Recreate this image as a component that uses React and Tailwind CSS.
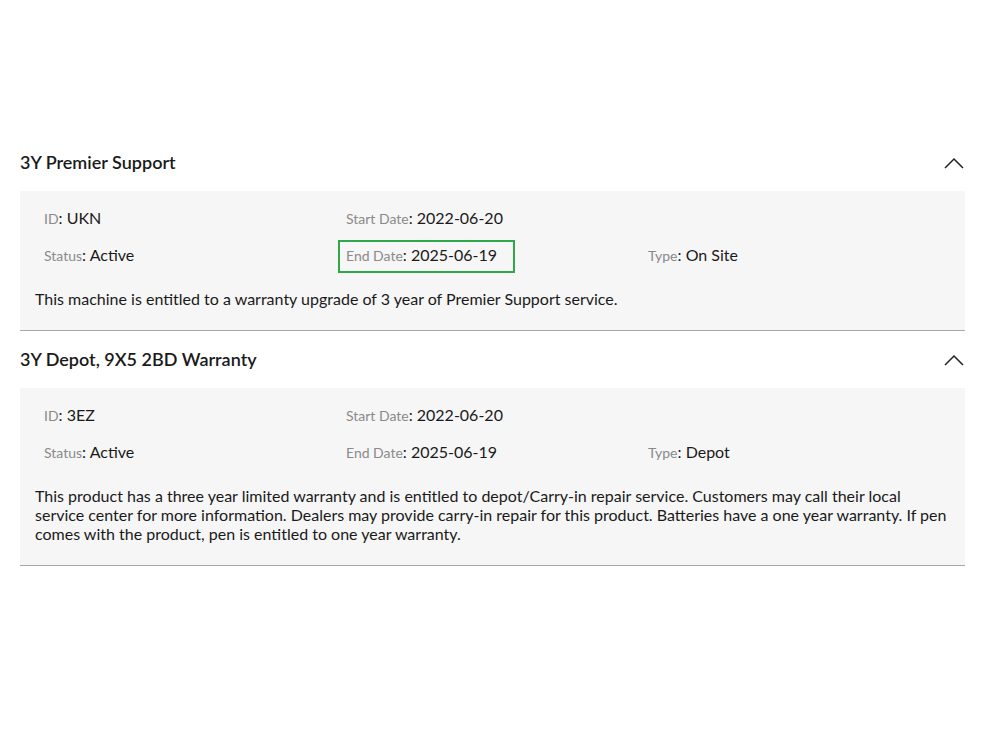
import React from 'react';

const warranties = [
  {
    title: '3Y Premier Support',
    id: 'UKN',
    status: 'Active',
    start: '2022-06-20',
    end: '2025-06-19',
    type: 'On Site',
    highlightEnd: true,
    text: 'This machine is entitled to a warranty upgrade of 3 year of Premier Support service.',
  },
  {
    title: '3Y Depot, 9X5 2BD Warranty',
    id: '3EZ',
    status: 'Active',
    start: '2022-06-20',
    end: '2025-06-19',
    type: 'Depot',
    highlightEnd: false,
    text: 'This product has a three year limited warranty and is entitled to depot/Carry-in repair service. Customers may call their local service center for more information. Dealers may provide carry-in repair for this product. Batteries have a one year warranty. If pen comes with the product, pen is entitled to one year warranty.',
  },
];

function ChevronUp() {
  return (
    <svg width="20" height="12" viewBox="0 0 20 12" fill="none">
      <polyline points="1,11 10,2 19,11" stroke="#222" strokeWidth="1.5" />
    </svg>
  );
}

function Field({ label, value, highlight }) {
  return (
    <div
      className={`justify-self-start h-[33px] flex items-baseline pt-[1px] pl-[6px] pr-[16px] border-2 ${
        highlight ? 'border-[#2ea84b]' : 'border-transparent'
      }`}
    >
      <span className="text-[14px] text-[#8a8a8a]">{label}</span>
      <span className="text-[16px] text-[#1a1a1a]">: {value}</span>
    </div>
  );
}

function WarrantyItem({ item }) {
  return (
    <div className="border-b border-[#a8a8a8]">
      {/* cabecera */}
      <div className="h-[57px] flex items-center justify-between">
        <h2 className="text-[18px] font-semibold text-[#1a1a1a]">{item.title}</h2>
        <div className="pr-[1px]">
          <ChevronUp />
        </div>
      </div>
      {/* detalle */}
      <div className="bg-[#f6f6f6] px-[15px] pt-[12px] pb-[22px]">
        <div className="grid grid-cols-[302px_302px_1fr] gap-y-[4px] ml-px">
          <Field label="ID" value={item.id} />
          <Field label="Start Date" value={item.start} />
          <div />
          <Field label="Status" value={item.status} />
          <Field label="End Date" value={item.end} highlight={item.highlightEnd} />
          <Field label="Type" value={item.type} />
        </div>
        <p className="mt-[16px] text-[16px] leading-[19px] text-[#1a1a1a]">{item.text}</p>
      </div>
    </div>
  );
}

export default function App() {
  return (
    <div className="min-h-screen bg-white font-['Lato','Open_Sans',sans-serif] pt-[134px] px-[20px] w-[986px]">
      <div className="w-[945px]">
        {warranties.map((w) => (
          <WarrantyItem key={w.title} item={w} />
        ))}
      </div>
    </div>
  );
}
